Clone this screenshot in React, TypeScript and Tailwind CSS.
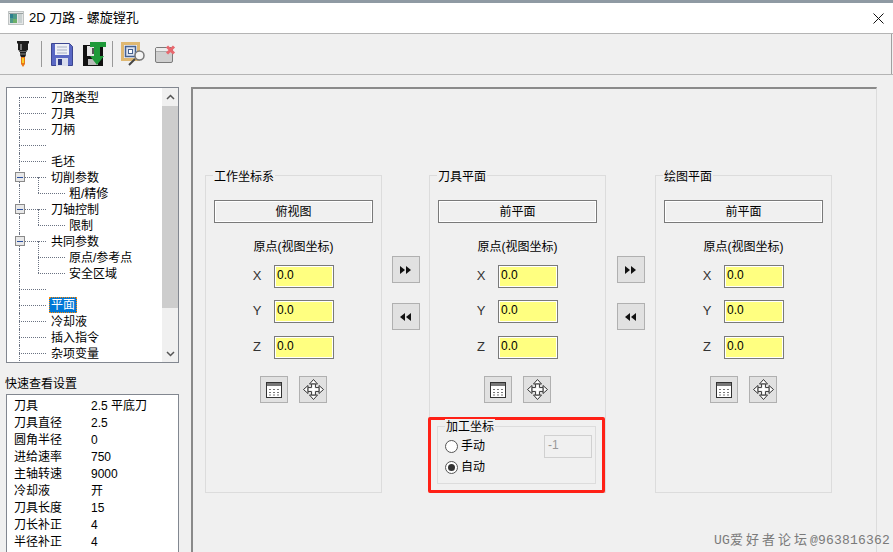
import type { ReactNode } from 'react';

const FONT = '"Liberation Sans", "Noto Sans CJK SC", sans-serif';

type TreeItem = {
  label: string;
  level: 0 | 1;
  expander?: boolean;
  selected?: boolean;
};

const TREE: TreeItem[] = [
  { label: '刀路类型', level: 0 },
  { label: '刀具', level: 0 },
  { label: '刀柄', level: 0 },
  { label: '', level: 0 },
  { label: '毛坯', level: 0 },
  { label: '切削参数', level: 0, expander: true },
  { label: '粗/精修', level: 1 },
  { label: '刀轴控制', level: 0, expander: true },
  { label: '限制', level: 1 },
  { label: '共同参数', level: 0, expander: true },
  { label: '原点/参考点', level: 1 },
  { label: '安全区域', level: 1 },
  { label: '', level: 0 },
  { label: '平面', level: 0, selected: true },
  { label: '冷却液', level: 0 },
  { label: '插入指令', level: 0 },
  { label: '杂项变量', level: 0 },
];

const SUMMARY = [
  ['刀具', '2.5 平底刀'],
  ['刀具直径', '2.5'],
  ['圆角半径', '0'],
  ['进给速率', '750'],
  ['主轴转速', '9000'],
  ['冷却液', '开'],
  ['刀具长度', '15'],
  ['刀长补正', '4'],
  ['半径补正', '4'],
];

function TreeRow({ item, first }: { item: TreeItem; first: boolean }) {
  return (
    <div className="relative h-4 text-[12px] leading-4 text-black">
      {/* vertical trunk */}
      <div
        className={
          first
            ? 'absolute left-[12px] top-[8px] h-2 border-l border-dotted border-gray-500'
            : 'absolute left-[12px] top-0 h-4 border-l border-dotted border-gray-500'
        }
      />
      {item.level === 1 && (
        <div className="absolute left-[31px] -top-2 h-[16px] border-l border-dotted border-gray-500" />
      )}
      <div
        className={
          item.level === 0
            ? 'absolute left-[12px] top-[8px] w-[27px] border-t border-dotted border-gray-500'
            : 'absolute left-[31px] top-[8px] w-[27px] border-t border-dotted border-gray-500'
        }
      />
      {item.expander && (
        <div className="absolute left-[8px] top-[3px] flex h-[10px] w-[10px] items-center justify-center border border-[#8a8a8a] bg-[#e8e8e8]">
          <div className="h-px w-[6px] bg-[#2a4fa0]" />
        </div>
      )}
      <span
        className={
          item.selected
            ? 'absolute left-[42px] top-0 h-4 border border-dotted border-orange-400 bg-[#0078d7] px-[1px] leading-[14px] text-white'
            : item.level === 0
              ? 'absolute left-[44px] top-[1px] whitespace-nowrap'
              : 'absolute left-[62px] top-[1px] whitespace-nowrap'
        }
      >
        {item.label}
      </span>
    </div>
  );
}

function WindowIcon() {
  return (
    <svg width="16" height="14" viewBox="0 0 16 14">
      <rect x="0.5" y="0.5" width="15" height="13" fill="#e4e6e6" stroke="#c0c4c4" />
      <rect x="1" y="2" width="14" height="1" fill="#9aa2a2" />
      <rect x="2" y="3" width="7" height="9" fill="#4f9a8a" />
      <rect x="2" y="3" width="3" height="4" fill="#2c7f8f" />
      <rect x="5" y="8" width="4" height="4" fill="#6fb06a" />
      <rect x="10" y="3" width="4" height="9" fill="#c8d0d0" />
    </svg>
  );
}

function ToolIcon() {
  return (
    <svg width="12" height="26" viewBox="0 0 12 26">
      <path d="M0 0h12v2l-1 1v6l-2 1v4l-1 2h-4l-1-2v-4l-2-1v-6l-1-1z" fill="#1c1c1c" />
      <path d="M3 3h2v6h-2z" fill="#777" />
      <rect x="2" y="10" width="8" height="1" fill="#666" />
      <rect x="3" y="12" width="6" height="2" fill="#555" />
      <path d="M4 16h4v7l-2 3-2-3z" fill="#e8761a" />
      <rect x="5" y="17" width="2" height="5" fill="#f6d22a" />
    </svg>
  );
}

function SaveIcon() {
  return (
    <svg width="22" height="23" viewBox="0 0 22 23">
      <path d="M0.5 0.5h18l3 3v19h-21z" fill="#5a68c4" stroke="#3c4690" />
      <rect x="4" y="1" width="14" height="11" fill="#eef0f6" />
      <path d="M6 4h10M6 7h10M6 10h10" stroke="#a6aec4" />
      <rect x="5" y="15" width="12" height="8" fill="#d9dded" />
      <rect x="7" y="16" width="4" height="6" fill="#2e3a86" />
    </svg>
  );
}

function SaveDownIcon() {
  return (
    <svg width="23" height="24" viewBox="0 0 23 24">
      <rect x="0" y="3" width="20" height="21" fill="#111" />
      <rect x="4" y="4" width="10" height="10" fill="#e5e5e5" />
      <rect x="9" y="6" width="2" height="6" fill="#555" />
      <rect x="5" y="17" width="10" height="6" fill="#bcbcbc" />
      <path d="M7 0h16v5h-6v9h4l-7 9-7-9h4V5H7z" fill="#1f9a3a" />
    </svg>
  );
}

function ViewIcon() {
  return (
    <svg width="25" height="25" viewBox="0 0 25 25">
      <rect x="1.5" y="1.5" width="16" height="16" fill="#eef1f8" stroke="#dfb872" strokeWidth="3" />
      <rect x="4.5" y="4.5" width="10" height="10" fill="#dbe2f0" stroke="#45618f" strokeWidth="1.5" />
      <rect x="7.5" y="7.5" width="4" height="4" fill="#fff" stroke="#45618f" />
      <circle cx="18.5" cy="13.5" r="4.5" fill="#f4f4f4" stroke="#777" strokeWidth="1.5" />
      <path d="M14 17l-6 6" stroke="#444" strokeWidth="2" />
    </svg>
  );
}

function DeleteIcon() {
  return (
    <svg width="22" height="18" viewBox="0 0 22 18">
      <rect x="0.5" y="2.5" width="17" height="15" rx="1.5" fill="#cfcfcf" stroke="#7b7b7b" />
      <path d="M1 6h16" stroke="#8a8a8a" />
      <path d="M1 3h16v3H1z" fill="#ececec" />
      <path d="M12 1.500l7 7M19 1.500l-7 7" stroke="#e8686e" strokeWidth="3" />
    </svg>
  );
}

function GridIcon() {
  return (
    <svg width="16" height="16" viewBox="0 0 16 16">
      <rect x="0.5" y="0.5" width="15" height="15" fill="#fff" stroke="#333" />
      <rect x="1" y="1" width="14" height="3" fill="#777" />
      <path d="M3 7.500h2M7 7.500h2M11 7.500h2M3 10.500h2M7 10.500h2M11 10.500h2M3 13h2M7 13h2M11 13h2" stroke="#777" />
    </svg>
  );
}

function MoveIcon() {
  return (
    <svg width="21" height="21" viewBox="0 0 21 21">
      {/* four outlined arrow heads */}
      <path d="M10.5 0.500l4 4.500h-8zM10.500 20.500l-4-4.500h8zM0.500 10.500l4.500-4v8zM20.500 10.500l-4.500 4v-8z" fill="#fff" stroke="#333" />
      {/* centre cross */}
      <path d="M8.500 5h4v3.500H16v4h-3.500V16h-4v-3.500H5v-4h3.500z" fill="#e1e1e1" stroke="#444" />
      <path d="M10.500 6v9M6 10.500h9" stroke="#fff" strokeWidth="2" />
    </svg>
  );
}

function IconButton({ children }: { children: ReactNode }) {
  return (
    <div className="flex h-[27px] w-[28px] items-center justify-center border border-[#b0b0b0] bg-[#e1e1e1]">
      {children}
    </div>
  );
}

function DoubleArrow({ left }: { left?: boolean }) {
  return (
    <svg width="11" height="8" viewBox="0 0 11 8">
      <path d={left ? 'M5 0v8L0 4zM11 0v8L6 4z' : 'M0 0v8l5-4zM6 0v8l5-4z'} fill="#111" />
    </svg>
  );
}

function CoordField({ axis }: { axis: string }) {
  return (
    <div className="flex h-[23px] items-center last:mt-[1px]">
      <span className="w-[24px] pb-[1px] text-center text-[13px] text-[#333]">{axis}</span>
      <div className="ml-[5px] flex h-[23px] w-[60px] items-center border border-[#7a7a7a] bg-[#ffff80] pb-[3px] pl-[2px] text-[12px] text-black ring-1 ring-inset ring-white">
        0.0
      </div>
    </div>
  );
}

function PlaneGroup({
  title,
  view,
  children,
}: {
  title: string;
  view: string;
  children?: ReactNode;
}) {
  return (
    <div className="relative h-[318px] w-[177px] shrink-0 border border-[#dcdcdc]">
      <span className="absolute -top-[7px] left-[7px] bg-[#f0f0f0] px-[1px] text-[12px] leading-4 text-black">
        {title}
      </span>
      <div className="flex flex-col">
        <div className="mx-[8px] mt-[24px] flex h-[23px] items-center justify-center border border-[#7a7a7a] bg-[#f0f0f0] text-[12px] text-black ring-1 ring-inset ring-white">
          {view}
        </div>
        <div className="mt-[16px] text-center text-[12px] leading-4 text-black">原点(视图坐标)</div>
        <div className="mt-[10px] flex flex-col gap-[12px] pl-[39px]">
          <CoordField axis="X" />
          <CoordField axis="Y" />
          <CoordField axis="Z" />
        </div>
        <div className="mt-[17px] flex justify-center gap-[11px]">
          <IconButton>
            <GridIcon />
          </IconButton>
          <IconButton>
            <MoveIcon />
          </IconButton>
        </div>
      </div>
      {children}
    </div>
  );
}

function ArrowPair({ width }: { width: string }) {
  return (
    <div className={`flex ${width} shrink-0 flex-col items-center gap-[20px] pt-[81px]`}>
      <IconButton>
        <DoubleArrow />
      </IconButton>
      <IconButton>
        <DoubleArrow left />
      </IconButton>
    </div>
  );
}

export default function App() {
  return (
    <div
      className="relative flex h-[552px] w-[893px] flex-col overflow-hidden bg-[#f0f0f0]"
      style={{ fontFamily: FONT }}
    >
      {/* title bar */}
      <div className="h-[3px] shrink-0 bg-[#8f9aa3]" />
      <div className="flex h-[30px] shrink-0 items-center bg-white pl-[8px] pr-[9px]">
        <WindowIcon />
        <span className="ml-[5px] text-[13px] text-black">2D 刀路 - 螺旋镗孔</span>
        <svg width="11" height="11" viewBox="0 0 11 11" className="ml-auto">
          <path d="M0.5 0.5l10 10M10.500 0.500l-10 10" stroke="#111" />
        </svg>
      </div>

      {/* toolbar */}
      <div className="flex h-[42px] shrink-0 items-center border-y border-[#b4b4b4] bg-[#f0f0f0] pl-[17px] pr-px">
        <ToolIcon />
        <div className="ml-[12px] h-[26px] w-px bg-[#999]" />
        <div className="ml-[9px]">
          <SaveIcon />
        </div>
        <div className="ml-[10px]">
          <SaveDownIcon />
        </div>
        <div className="ml-[6px] h-[26px] w-px bg-[#999]" />
        <div className="ml-[8px]">
          <ViewIcon />
        </div>
        <div className="ml-[9px]">
          <DeleteIcon />
        </div>
        <div className="ml-auto h-full w-px bg-[#a0a0a0]" />
      </div>

      {/* body */}
      <div className="flex min-h-0 flex-1 overflow-hidden pt-[12px]">
        <div className="ml-[6px] flex w-[173px] shrink-0 flex-col">
          <div className="relative h-[276px] shrink-0 overflow-hidden border border-[#828790] bg-white pt-[1px]">
            {TREE.map((item, i) => (
              <TreeRow key={i} item={item} first={i === 0} />
            ))}
            <div className="absolute bottom-0 right-0 top-0 flex w-[16px] flex-col bg-[#f0f0f0]">
              <div className="flex h-[18px] items-center justify-center">
                <svg width="9" height="6" viewBox="0 0 9 6">
                  <path d="M1 5l3.500-3.500L8 5" fill="none" stroke="#555" strokeWidth="1.5" />
                </svg>
              </div>
              <div className="h-[202px] bg-[#cdcdcd]" />
              <div className="flex flex-1 items-end justify-center pb-[5px]">
                <svg width="9" height="6" viewBox="0 0 9 6">
                  <path d="M1 1l3.500 3.500L8 1" fill="none" stroke="#555" strokeWidth="1.5" />
                </svg>
              </div>
            </div>
          </div>
          <div className="mt-[13px] shrink-0 text-[12px] leading-4 text-black">
            <span className="-ml-px">快速查看设置</span>
          </div>
          <div className="mt-[2px] h-[200px] shrink-0 border border-[#828790] bg-white pl-[7px] pt-[3px]">
            {SUMMARY.map(([k, v]) => (
              <div key={k} className="flex h-[17px] text-[12px] leading-[17px] text-black">
                <span className="w-[77px]">{k}</span>
                <span>{v}</span>
              </div>
            ))}
          </div>
        </div>

        {/* main panel */}
        <div className="ml-[12px] mr-[16px] flex-1 overflow-hidden border-l-2 border-r border-t-2 border-[#8a8a8a] border-r-[#dcdcdc] pt-[86px]">
          <div className="flex pl-[12px]">
            <PlaneGroup title="工作坐标系" view="俯视图" />
            <ArrowPair width="w-[47px]" />
            <PlaneGroup title="刀具平面" view="前平面">
              <div className="absolute bottom-[-1px] left-[-2px] h-[76px] w-[177px] rounded-[2px] border-[3px] border-[#ff2016] px-[6px] pt-[6px]">
                <div className="relative h-[58px] border border-[#dcdcdc]">
                  <span className="absolute -top-[8px] left-[7px] bg-[#f0f0f0] px-[1px] text-[12px] leading-4 text-black">
                    加工坐标
                  </span>
                  <div className="absolute left-[7px] top-[11px] flex items-center text-[12px] leading-4 text-black">
                    <span className="mr-[3px] h-[13px] w-[13px] rounded-full border border-[#555] bg-white" />
                    手动
                  </div>
                  <div className="absolute left-[7px] top-[32px] flex items-center text-[12px] leading-4 text-black">
                    <span className="mr-[3px] flex h-[13px] w-[13px] items-center justify-center rounded-full border border-[#555] bg-white">
                      <span className="h-[7px] w-[7px] rounded-full bg-[#333]" />
                    </span>
                    自动
                  </div>
                  <div className="absolute right-[3px] top-[8px] flex h-[23px] w-[48px] items-center border border-[#d0d0d0] pb-[3px] pl-[3px] text-[12px] text-[#999]">
                    -1
                  </div>
                </div>
              </div>
            </PlaneGroup>
            <ArrowPair width="w-[49px]" />
            <PlaneGroup title="绘图平面" view="前平面" />
          </div>
        </div>
      </div>

      <div className="absolute bottom-[3px] right-[3px] whitespace-nowrap text-[13px] leading-4 tracking-[0.2px] text-[#7a7a7a] [font-family:'Liberation_Mono','Noto_Sans_CJK_SC',monospace]">
        UG<span className="tracking-[3px]">爱好者论坛</span>@963816362
      </div>
    </div>
  );
}
